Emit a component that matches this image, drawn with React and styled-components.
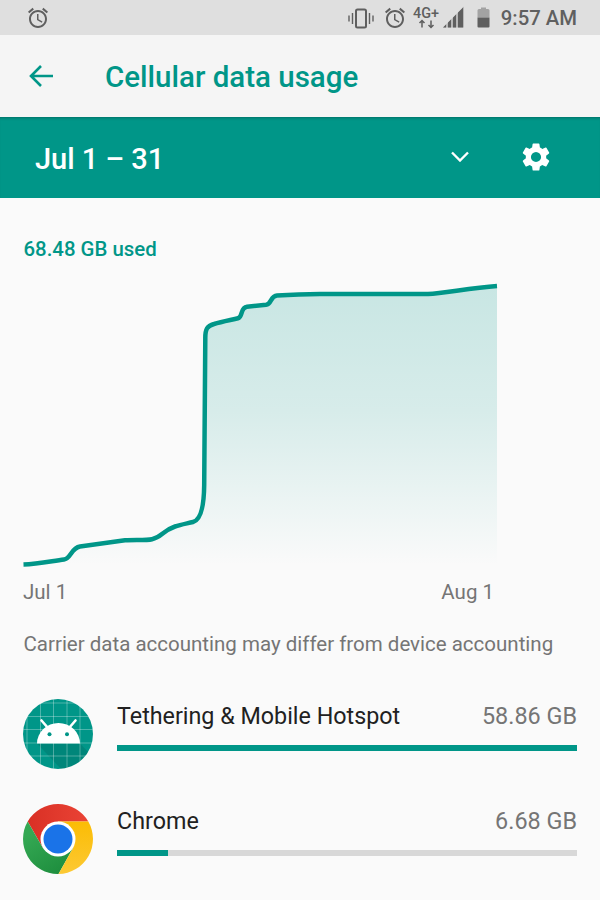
import React from "react";
import styled, { createGlobalStyle } from "styled-components";

const Global = createGlobalStyle`
    html, body {
        margin: 0;
        padding: 0;
        height: 900px;
        overflow: hidden;
        background: #fafafa;
        font-family: Roboto, sans-serif;
    }
`;

const Page = styled.div`
    width: 600px;
    height: 900px;
    overflow: hidden;
    display: flex;
    flex-direction: column;
`;

const StatusBar = styled.div`
    height: 35px;
    background: #dfdfdf;
    display: flex;
    align-items: center;
    padding: 0 23px 0 26px;
    color: #5f5f5f;
`;
const StatusRight = styled.div`
    margin-left: auto;
    display: flex;
    align-items: center;
`;
const StatusIcon = styled.svg`
    display: block;
    overflow: visible;
    margin-left: ${(p) => p.$gap || 0}px;
`;
const Clock = styled.span`
    font-size: 20.3px;
    font-weight: 500;
    margin-left: 11px;
    color: #606060;
    white-space: nowrap;
`;

const Header = styled.div`
    height: 82px;
    background: #f5f5f5;
    display: flex;
    align-items: center;
    padding-left: 28px;
    color: #009688;
`;
const Title = styled.h1`
    margin: 1px 0 0 51px;
    font-size: 29.5px;
    font-weight: 500;
    color: #009688;
`;

const Band = styled.div`
    height: 81px;
    background: #009688;
    box-shadow: inset 0 3px 3px -2px rgba(0, 0, 0, 0.25);
    display: flex;
    align-items: center;
    padding: 0 47px 0 35px;
    color: #fff;
`;
const Range = styled.div`
    font-size: 29px;
    font-weight: 500;
    flex: 1;
    margin-top: 2px;
`;
const Chevron = styled.svg`
    margin: 0 50px 2px 0;
`;
const Gear = styled.svg`
    margin-bottom: 2px;
`;

const Used = styled.div`
    margin: 39px 0 0 23.5px;
    height: 24px;
    line-height: 24px;
    font-size: 20.4px;
    font-weight: 500;
    color: #009688;
`;
const Chart = styled.svg`
    display: block;
    margin-top: 9px;
`;
const Axis = styled.div`
    display: flex;
    justify-content: space-between;
    padding: 0 106px 0 23px;
    font-size: 20.5px;
    color: #757575;
    line-height: 24px;
    margin-top: 10px;
`;
const Note = styled.p`
    margin: 28px 0 0 23.5px;
    font-size: 20.5px;
    line-height: 24px;
    color: #757575;
    white-space: nowrap;
`;

const AppList = styled.div`
    margin-top: 43px;
    display: flex;
    flex-direction: column;
    gap: 35px;
    padding: 0 23px;
`;
const AppRow = styled.div`
    display: flex;
    align-items: flex-start;
    gap: 24px;
`;
const AppBody = styled.div`
    flex: 1;
    padding-top: 3px;
    display: flex;
    flex-direction: column;
`;
const AppLine = styled.div`
    display: flex;
    justify-content: space-between;
    align-items: baseline;
    line-height: 28px;
`;
const AppName = styled.span`
    font-size: 23.3px;
    color: #212121;
`;
const AppSize = styled.span`
    font-size: 23.4px;
    color: #757575;
`;
const Track = styled.div`
    height: 6px;
    margin-top: 15px;
    background: #d8d8d8;
`;
const Fill = styled.div`
    height: 100%;
    background: #009688;
`;

const AlarmIcon = ({ gap }) => (
    <StatusIcon $gap={gap} width="24" height="24" viewBox="0 0 24 24" fill="currentColor">
        <path d="M22 5.72l-4.600-3.860-1.290 1.530 4.600 3.860L22 5.720zM7.880 3.390L6.600 1.860 2 5.710l1.290 1.530 4.590-3.850zM12.500 8H11v6l4.750 2.850.75-1.230-4-2.370V8zM12 4c-4.970 0-9 4.030-9 9s4.030 9 9 9 9-4.030 9-9-4.030-9-9-9zm0 16c-3.870 0-7-3.130-7-7s3.130-7 7-7 7 3.130 7 7-3.130 7-7 7z" />
    </StatusIcon>
);

const AndroidIcon = () => (
    <svg width="70" height="70" viewBox="0 0 70 70">
        <defs>
            <clipPath id="disc">
                <circle cx="35" cy="35" r="35" />
            </clipPath>
        </defs>
        <circle cx="35" cy="35" r="35" fill="#009688" />
        <g clipPath="url(#disc)">
            <path d="M14 44.500H57L70 58V70H38Z" fill="#000" fillOpacity="0.1" />
            {[4, 17.5, 30.5, 44, 57].map((p) => (
                <path key={p} d={`M${p} 0V70M0 ${p}H70`} stroke="#fff" strokeOpacity="0.3" strokeWidth="1" />
            ))}
        </g>
        <path d="M14 44.500a21.500 20.500 0 0 1 43 0z" fill="#fff" />
        <path d="M25 29l-6.500-7.500M46 29l6.500-7.500" stroke="#fff" strokeWidth="2.600" strokeLinecap="round" />
        <circle cx="26.500" cy="35.300" r="2" fill="#009688" />
        <circle cx="44" cy="35.300" r="2" fill="#009688" />
    </svg>
);

const ChromeIcon = () => (
    <svg width="70" height="70" viewBox="0 0 70 70">
        <defs>
            <linearGradient id="cr" x1="0" y1="0" x2="1" y2="0">
                <stop offset="0" stopColor="#d93025" />
                <stop offset="1" stopColor="#ea4335" />
            </linearGradient>
            <linearGradient id="cg" x1="0.7" y1="1" x2="0.2" y2="0.2">
                <stop offset="0" stopColor="#1e8e3e" />
                <stop offset="1" stopColor="#34a853" />
            </linearGradient>
            <linearGradient id="cy" x1="0.5" y1="0" x2="0.5" y2="1">
                <stop offset="0" stopColor="#fbbc04" />
                <stop offset="1" stopColor="#fcc934" />
            </linearGradient>
        </defs>
        <path d="M4.700 17.500A35 35 0 0 1 65.300 17.500L35 17.500 35 35 19.800 43.800Z" fill="url(#cr)" />
        <path d="M4.700 17.500L19.800 43.800 35 35 50.200 43.800 35.500 70A35 35 0 0 1 4.700 17.500Z" fill="url(#cg)" />
        <path d="M65.300 17.500A35 35 0 0 1 35.500 70L50.200 43.800 35 35 35 17.500Z" fill="url(#cy)" />
        <circle cx="35" cy="35" r="17.500" fill="#fff" />
        <circle cx="35" cy="35" r="14.500" fill="#1a73e8" />
    </svg>
);

const linePath =
    "M23.500 294.500 C38 294 52 291 64 289.500 C71 288.500 71 278 80 276.500 L125 270.300 C134 269.600 146 270.600 152 269.200 C162 267.200 162 261 175 256.500 C181 254.600 187 253.500 193 252 C201 250 204 235 204.200 215 L205.300 68 C205.300 59 207 56 214 54 C222 51.500 231 50 238 48.300 C243 47 240 37.500 247 36.700 L266 34.800 C272 34 270 26 277 25.600 C288 24.800 300 24 320 24 L428 24 C445 23 470 18 497 16";

const UsageChart = () => (
    <Chart width="600" height="300" viewBox="0 0 600 300">
        <defs>
            <linearGradient id="area" x1="0" y1="0" x2="0" y2="1">
                <stop offset="0" stopColor="#009688" stopOpacity="0.2" />
                <stop offset="0.45" stopColor="#009688" stopOpacity="0.14" />
                <stop offset="1" stopColor="#009688" stopOpacity="0" />
            </linearGradient>
        </defs>
        <path d={`${linePath} L497 295 L23 295 Z`} fill="url(#area)" />
        <path d={linePath} fill="none" stroke="#009688" strokeWidth="4.500" strokeLinejoin="round" />
    </Chart>
);

const apps = [
    { name: "Tethering & Mobile Hotspot", size: "58.86 GB", pct: 100, Icon: AndroidIcon },
    { name: "Chrome", size: "6.68 GB", pct: 11, Icon: ChromeIcon },
];

export default function App() {
    return (
        <Page>
            <Global />
            <StatusBar>
                <AlarmIcon />
                <StatusRight>
                    <StatusIcon width="26" height="24" viewBox="0 0 26 24" fill="none" stroke="currentColor">
                        <rect x="8" y="3.500" width="10" height="18" rx="1.500" strokeWidth="2" />
                        <path d="M4.500 7v11M21.500 7v11M1 9.500v6M25 9.500v6" strokeWidth="1.400" />
                    </StatusIcon>
                    <AlarmIcon gap={9} />
                    <StatusIcon $gap={6} width="28" height="24" viewBox="0 0 28 24" fill="currentColor">
                        <text x="0" y="11.500" fontFamily="Roboto, sans-serif" fontWeight="500" fontSize="15" textLength="26" lengthAdjust="spacingAndGlyphs">4G+</text>
                        <path d="M9 21.500v-7M6.500 17L9 14.500 11.500 17M18 14.500v7M15.500 19L18 21.500 20.500 19" stroke="currentColor" strokeWidth="1.500" fill="none" />
                    </StatusIcon>
                    <StatusIcon $gap={2} width="21" height="24" viewBox="0 0 21 24" fill="currentColor">
                        <path d="M0 21.500 21 .5V21.500Z" opacity="0.3" />
                        <path d="M0 21.500l3-3v3zM5 21.500v-5l3-3v8zM10 21.500v-10l3-3v13zM15 21.500v-15l5-5v20z" />
                    </StatusIcon>
                    <StatusIcon $gap={13} width="13" height="24" viewBox="0 0 13 24">
                        <path d="M4 1.500h5v1.500h2a1.500 1.500 0 0 1 1.500 1.500v7H.5v-7A1.500 1.500 0 0 1 2 3h2z" fill="#a3a3a3" />
                        <path d="M.5 11.500h12v9a1 1 0 0 1-1 1H1.500a1 1 0 0 1-1-1z" fill="#5f5f5f" />
                    </StatusIcon>
                    <Clock>9:57 AM</Clock>
                </StatusRight>
            </StatusBar>
            <Header>
                <svg width="26" height="26" viewBox="0 0 26 26" fill="none" stroke="currentColor" strokeWidth="2.600">
                    <path d="M25 13H3M13 3 3 13l10 10" />
                </svg>
                <Title>Cellular data usage</Title>
            </Header>
            <Band>
                <Range>Jul 1 – 31</Range>
                <Chevron width="18" height="11" viewBox="0 0 18 11" fill="none" stroke="#fff" strokeWidth="2.400">
                    <path d="M1 1.500l8 8 8-8" />
                </Chevron>
                <Gear width="34" height="34" viewBox="0 0 24 24" fill="#fff">
                    <path d="M19.140 12.940c.04-.3.06-.61.06-.94s-.02-.64-.07-.94l2.030-1.580a.49.49 0 0 0 .12-.61l-1.920-3.320a.49.49 0 0 0-.59-.22l-2.390.96c-.5-.38-1.030-.7-1.620-.94l-.36-2.540a.48.48 0 0 0-.48-.41h-3.840c-.24 0-.43.17-.47.41l-.36 2.540c-.59.24-1.130.57-1.620.94l-2.390-.96a.48.48 0 0 0-.59.22L2.740 8.870a.48.48 0 0 0 .12.61l2.030 1.580c-.05.3-.09.63-.09.94s.02.64.07.94l-2.030 1.580a.49.49 0 0 0-.12.61l1.920 3.320c.12.22.37.29.59.22l2.390-.96c.5.38 1.030.7 1.620.94l.36 2.540c.05.24.24.41.48.41h3.840c.24 0 .44-.17.47-.41l.36-2.540c.59-.24 1.130-.56 1.620-.94l2.390.96c.22.08.47 0 .59-.22l1.920-3.320a.48.48 0 0 0-.12-.61l-2.010-1.580zM12 15.600A3.610 3.610 0 0 1 8.400 12 3.610 3.610 0 0 1 12 8.400a3.610 3.610 0 0 1 3.600 3.600 3.610 3.610 0 0 1-3.600 3.600z" />
                </Gear>
            </Band>
            <Used>68.48 GB used</Used>
            <UsageChart />
            <Axis>
                <span>Jul 1</span>
                <span>Aug 1</span>
            </Axis>
            <Note>Carrier data accounting may differ from device accounting</Note>
            <AppList>
                {apps.map(({ name, size, pct, Icon }) => (
                    <AppRow key={name}>
                        <Icon />
                        <AppBody>
                            <AppLine>
                                <AppName>{name}</AppName>
                                <AppSize>{size}</AppSize>
                            </AppLine>
                            <Track>
                                <Fill style={{ width: `${pct}%` }} />
                            </Track>
                        </AppBody>
                    </AppRow>
                ))}
            </AppList>
        </Page>
    );
}
